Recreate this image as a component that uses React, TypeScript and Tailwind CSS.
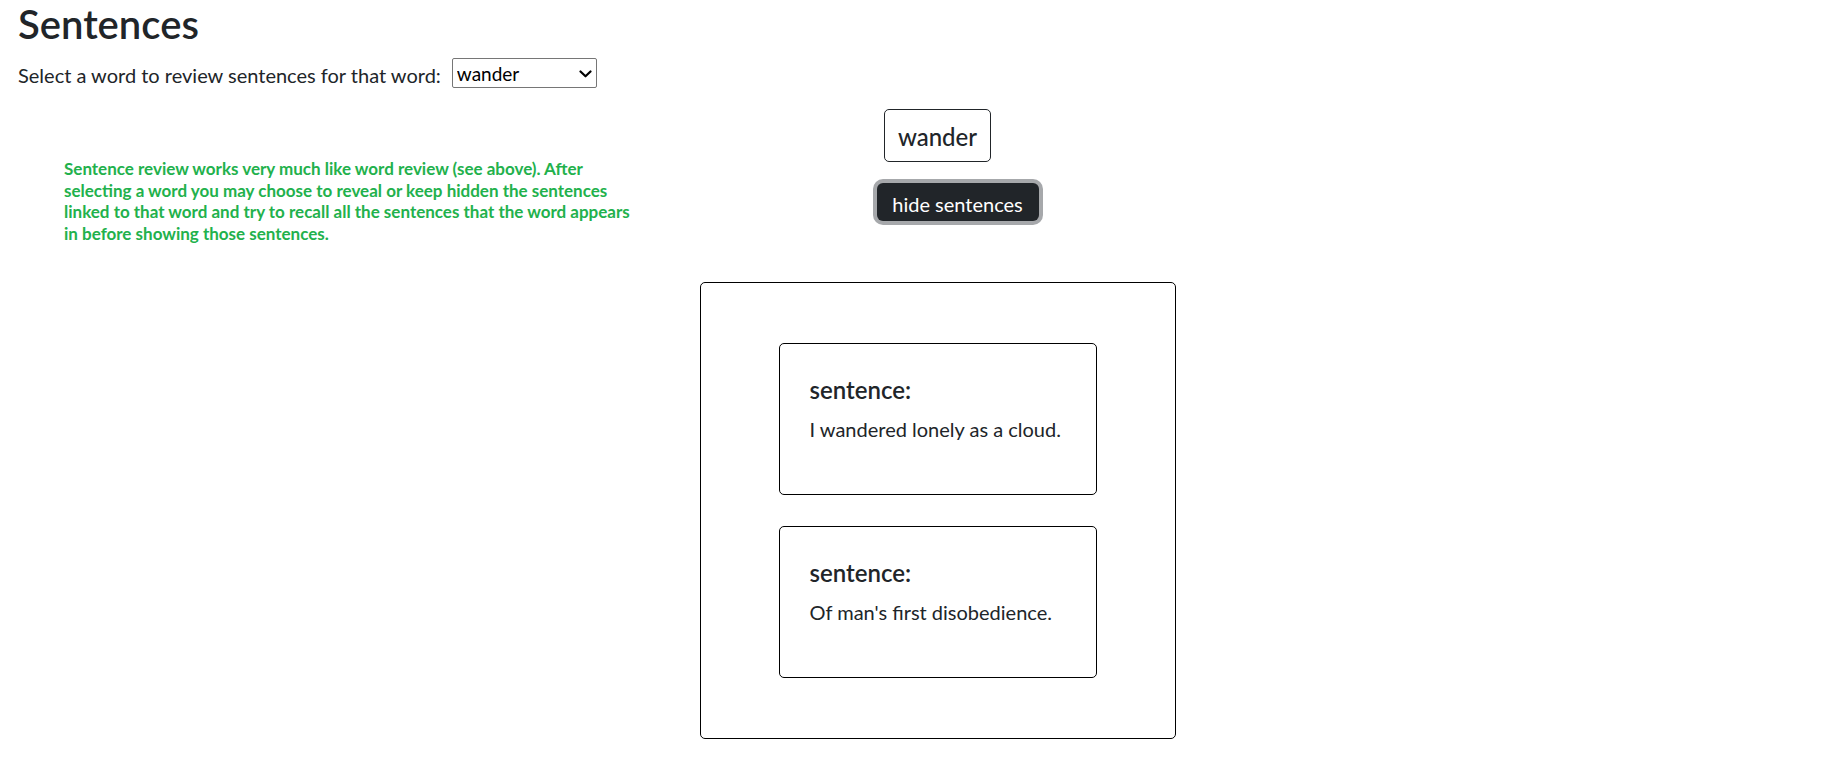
import { useState } from "react";

const sentences = ["I wandered lonely as a cloud.", "Of man's first disobedience."];

export default function App() {
  const [word, setWord] = useState("wander");
  const [shown, setShown] = useState(true);

  return (
    <div className="min-h-screen bg-white text-[#212529] font-['Lato','Liberation_Sans',sans-serif]">
      <div className="pl-[18px]">
        <h1 className="m-0 h-[48px] text-[40px] font-semibold leading-[48px]">Sentences</h1>
        <div className="mt-[10px] flex h-[30px] items-center gap-[11px] text-[20px]">
          <label htmlFor="word" className="pt-[4px] leading-[24px]">
            Select a word to review sentences for that word:
          </label>
          <div className="relative h-[30px] w-[145px]">
            <select
              id="word"
              value={word}
              onChange={(e) => setWord(e.target.value)}
              className="h-[30px] w-[145px] appearance-none rounded-[2px] border border-[#767676] bg-white pl-[4px] pt-[2px] text-[19px] leading-[24px] text-black outline-none"
            >
              <option value="wander">wander</option>
              <option value="man">man</option>
              <option value="cloud">cloud</option>
            </select>
            <svg
              className="pointer-events-none absolute right-[5px] top-[12px]"
              width="13"
              height="8"
              viewBox="0 0 13 8"
              fill="none"
            >
              <path d="M1.5 1.5 L6.5 6.3 L11.5 1.5" stroke="#000" strokeWidth="2.2" strokeLinecap="round" strokeLinejoin="round" />
            </svg>
          </div>
        </div>
      </div>

      <div className="flex">
        <div className="w-[640px] shrink-0 pl-[64px] pt-[70px]">
          <p className="whitespace-nowrap text-[17px] font-bold leading-[21.5px] text-[#22b14c]">
            Sentence review works very much like word review (see above). After
            <br />
            selecting a word you may choose to reveal or keep hidden the sentences
            <br />
            linked to that word and try to recall all the sentences that the word appears
            <br />
            in before showing those sentences.
          </p>
        </div>

        <div className="flex flex-1 flex-col items-center pt-[21px]">
          <div className="flex h-[53px] w-[107px] items-center justify-center rounded-[5px] border border-[#212529] pt-[3px] text-[24px] font-medium leading-[28px]">
            {word}
          </div>
          <button
            onClick={() => setShown(!shown)}
            className="ml-[40px] mt-[21px] h-[38px] w-[162px] rounded-[6px] bg-[#212529] pt-[4px] text-[20px] leading-[24px] text-white shadow-[0_0_0_4px_#a6a8ab]"
          >
            {shown ? "hide sentences" : "show sentences"}
          </button>

          {shown && (
            <div className="mt-[61px] flex w-[476px] flex-col items-center gap-[31px] rounded-[5px] border border-black py-[60px]">
              {sentences.map((s) => (
                <div key={s} className="h-[152px] w-[318px] rounded-[5px] border border-black pl-[30px] pt-[31px]">
                  <h5 className="mb-[13px] text-[24px] font-semibold leading-[29px]">sentence:</h5>
                  <p className="text-[20px] leading-[24px]">{s}</p>
                </div>
              ))}
            </div>
          )}
        </div>

        <div className="w-[604px] shrink-0" />
      </div>
    </div>
  );
}
